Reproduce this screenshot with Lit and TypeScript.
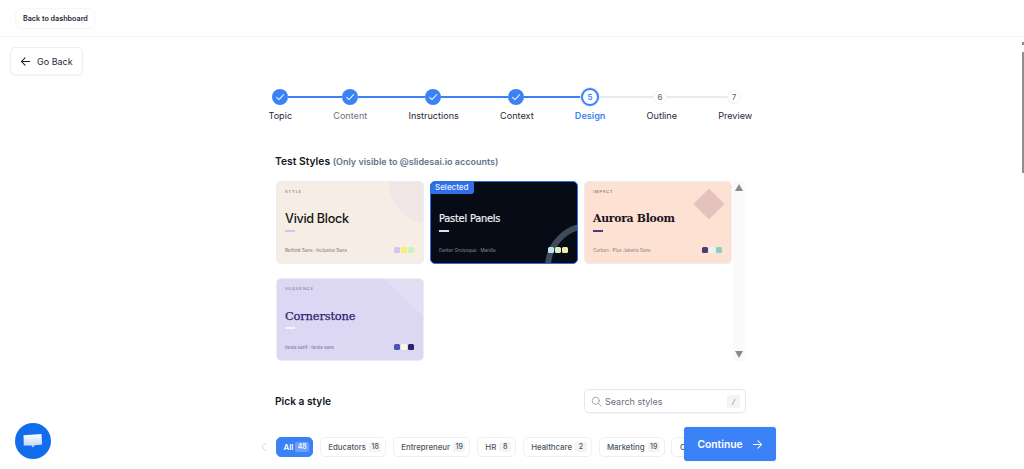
import { LitElement, html, css, svg } from "lit";
import { customElement } from "lit/decorators.js";

const STEPS = [
  { label: "Topic", state: "done", gap: 0 },
  { label: "Content", state: "done muted", gap: 54 },
  { label: "Instructions", state: "done", gap: 67 },
  { label: "Context", state: "done", gap: 67 },
  { label: "Design", state: "active", gap: 57 },
  { label: "Outline", state: "pending", gap: 54 },
  { label: "Preview", state: "pending", gap: 60 },
];

const CARDS = [
  { kicker: "STYLE", title: "Vivid Block", foot: "Rethink Sans · Inclusive Sans", cls: "vivid", sw: ["#d5c3f2", "#f7ee78", "#c6f5c0"] },
  { kicker: "", title: "Pastel Panels", foot: "Darker Grotesque · Manilla", cls: "pastel", sw: ["#bfe3f7", "#d8f0c6", "#f7e8a8"] },
  { kicker: "IMPACT", title: "Aurora Bloom", foot: "Corben · Plus Jakarta Sans", cls: "aurora", sw: ["#4f3a78", "#e3f6f6", "#84cfca"] },
  { kicker: "SEQUENCE", title: "Cornerstone", foot: "tiesta serif · tiesta sans", cls: "corner", sw: ["#4a55b8", "#fbfbdc", "#2e2070"] },
];

const CHIPS: [string, number][] = [
  ["Educators", 18], ["Entrepreneur", 19], ["HR", 8], ["Healthcare", 2], ["Marketing", 19], ["Operations", 6],
];

const check = svg`<path d="M4.6 8.3 7 10.6l4.6-5" fill="none" stroke="#e8f0ff" stroke-width="1.1" stroke-linecap="round" stroke-linejoin="round"/>`;

@customElement("app-root")
export class AppRoot extends LitElement {
  static styles = css`
    :host { display: block; height: 469px; overflow: hidden; position: relative; background: #fff;
      font-family: Inter, "Liberation Sans", sans-serif; color: #111827; }
    .top { height: 36px; border-bottom: 1px solid #f3f4f6; display: flex; align-items: center; padding-left: 15px; }
    .dash { height: 21px; width: 80px; box-sizing: border-box; padding-left: 7px; display: flex; align-items: center; border: 1px solid #f6f6f8; border-radius: 6px;
      font-size: 7.2px; font-weight: 600; color: #1f2937; margin-top: 1px; white-space: nowrap; }
    .back { margin: 10px 0 0 10px; width: 73px; height: 28px; box-sizing: border-box; display: flex; align-items: center; gap: 6px; padding-left: 9px;
      border: 1px solid #eeeff1; border-radius: 5px; box-shadow: 0 1px 2px rgba(0,0,0,.05); font-size: 9px; color: #1f2937; white-space: nowrap; }
    .col { margin-left: 268px; width: 484px; }
    .track { display: flex; align-items: center; height: 18px; margin-top: 13px; padding-left: 4px; }
    .dot { flex: none; width: 16px; height: 16px; border-radius: 50%; background: #3b82f6; display: flex; align-items: center; justify-content: center; }
    .dot svg { width: 16px; height: 16px; }
    .dot.active { width: 18px; height: 18px; box-sizing: border-box; background: #fff; border: 2px solid #3b82f6; box-shadow: 0 0 0 1px #dbe7fd; color: #3b82f6; font-size: 8px; font-weight: 600; }
    .dot.pending { width: 14px; height: 14px; box-sizing: border-box; background: #fff; border: 1px solid #eef0f4; color: #6b7280; font-size: 8px; font-weight: 500; }
    .link { flex: none; height: 2px; background: #3b82f6; }
    .link.off { background: #e8eaf3; }
    .labels { display: flex; gap: 41.2px; margin-top: 2px; padding-left: .5px; font-size: 9.1px; line-height: 16px; color: #1f2937; white-space: nowrap; }
    .labels .muted { color: #71717a; }
    .labels .active { color: #3b82f6; font-weight: 600; }
    .h { margin: 29px 0 0 7px; font-size: 10.3px; font-weight: 600; line-height: 16px; color: #111827; }
    .h small { font-size: 9px; font-weight: 600; color: #64748b; }
    .panel { margin: 11px 0 0 8px; width: 470px; height: 180px; display: flex; }
    .grid { width: 457px; display: grid; grid-template-columns: repeat(3, 148px); grid-auto-rows: 83px; column-gap: 6px; row-gap: 14px; }
    .bar { width: 12px; background: #fafafa; display: flex; flex-direction: column; justify-content: space-between; align-items: center; padding: 3px 0; box-sizing: border-box; }
    .tri { width: 0; height: 0; border-left: 4.5px solid transparent; border-right: 4.5px solid transparent; }
    .tri.up { border-bottom: 7px solid #8a8a8a; }
    .tri.down { border-top: 7px solid #8a8a8a; }
    .card { position: relative; overflow: hidden; box-sizing: border-box; border-radius: 5px; border: 1px solid #ecedf2; padding: 7px 9px 0 8px; display: flex; flex-direction: column; }
    .kicker { font-size: 4px; letter-spacing: .9px; height: 6px; line-height: 6px; color: #5c5c5c; }
    .title { margin-top: 15px; font-size: 13px; line-height: 18px; height: 18px; font-weight: 500; white-space: nowrap; position: relative; }
    .rule { width: 10px; height: 2px; margin-top: 1.5px; position: relative; }
    .bottom { margin-top: 15.5px; display: flex; justify-content: space-between; align-items: center; position: relative; }
    .foot { font-size: 4.5px; color: #77736f; white-space: nowrap; }
    .sws { display: flex; gap: 1px; }
    .sw { width: 6px; height: 6px; border-radius: 1.5px; }
    .vivid { background: #f6ede4; }
    .vivid .title { color: #141414; font-weight: 500; font-size: 12.6px; letter-spacing: -.3px; }
    .vivid .rule { background: #d5c2f0; }
    .vivid::before { content: ""; position: absolute; width: 80px; height: 80px; border-radius: 50%; right: -46px; top: -39px; background: #f1e6e6; }
    .pastel { background: #070b16; border: 1.5px solid #2f6fe8; }
    .pastel .title { color: #f2f4f7; font-family: "DejaVu Sans", sans-serif; font-weight: 400; font-size: 9.8px; letter-spacing: -.2px; -webkit-text-stroke: .2px #f2f4f7; }
    .pastel .rule { background: #cfe8f7; }
    .pastel .foot { color: #8a8f9a; }
    .arc { position: absolute; right: -56px; bottom: -48px; width: 88px; height: 88px; box-sizing: border-box; border: 6.5px solid #3f4a5a; border-radius: 50%; }
    .badge { position: absolute; left: -1px; top: -1px; height: 13px; padding: 0 5px; background: #2f6fe8; color: #eaf1ff; font-size: 8px; font-weight: 500; line-height: 13px; border-bottom-right-radius: 3px; }
    .aurora { background: #fde1d3; }
    .aurora .title { color: #1a1420; font-family: "DejaVu Serif", serif; font-weight: 700; font-size: 10.9px; letter-spacing: -.3px; }
    .aurora .rule { background: #4f3a78; }
    .aurora .foot { color: #8a7a78; }
    .aurora::before { content: ""; position: absolute; width: 22px; height: 22px; right: 11px; top: 11px; background: #e4c3bd; transform: rotate(45deg); }
    .corner { background: #dcd8f3; }
    .corner .title { color: #2b1f6e; font-family: "DejaVu Serif", serif; font-weight: 400; font-size: 11.5px; letter-spacing: -.2px; -webkit-text-stroke: .25px #2b1f6e; }
    .corner .rule { background: #f5f3fc; }
    .corner .kicker, .corner .foot { color: #6a6590; }
    .corner::before { content: ""; position: absolute; right: 0; top: 0; width: 39px; height: 37px; background: #e2dff5; clip-path: polygon(0 0, 100% 0, 100% 100%); }
    .row { margin: 28px 0 0 7px; display: flex; justify-content: space-between; align-items: center; width: 471px; }
    .row .h2 { font-size: 10.2px; font-weight: 600; }
    .search { width: 162px; height: 24px; box-sizing: border-box; border: 1px solid #e5e7eb; border-radius: 5px; display: flex; align-items: center; padding: 0 5px 0 6px; gap: 3px; font-size: 9px; color: #6b7280; box-shadow: 0 1px 1px rgba(0,0,0,.03); }
    .search span { flex: 1; }
    .search kbd { width: 13px; height: 13px; background: #f3f4f6; border-radius: 2px; font: italic 7px Inter, sans-serif; display: flex; align-items: center; justify-content: center; color: #6b7280; }
    .chips { margin: 24px 0 0 -8px; display: flex; align-items: center; width: 500px; }
    .chev { width: 16px; flex: none; display: flex; }
    .chip { flex: none; height: 20px; box-sizing: border-box; border: 1px solid #eef0f3; border-radius: 5px; padding: 0 4px 0 7.5px; margin-right: 6.5px; display: flex; align-items: center; gap: 3px; font-size: 7.8px; color: #4b5563; font-weight: 500; white-space: nowrap; }
    .chip b { min-width: 7px; padding: 0 2.5px; height: 10px; line-height: 10px; background: #f3f4f6; border-radius: 2px; text-align: center; font-size: 7px; font-weight: 500; color: #4b5563; }
    .chip.on { background: #3b82f6; color: #fff; border-color: #3b82f6; font-weight: 600; padding: 0 3px 0 6.5px; gap: 2px; }
    .chip.on b { background: #6aa0f8; color: #fff; }
    .cta { position: absolute; left: 684px; top: 427px; width: 92px; height: 34px; background: #3b82f6; border-radius: 3px; color: #fff; font-size: 10.3px; font-weight: 600; display: flex; align-items: center; justify-content: center; gap: 9px; box-shadow: 0 0 1px rgba(59,130,246,.5); }
    .chat { position: absolute; left: 15px; top: 423px; width: 36px; height: 36px; border-radius: 50%; background: #126ded; display: flex; align-items: center; justify-content: center; }
    .thumb { position: absolute; right: 0; top: 52px; width: 2px; height: 121px; background: #909090; }
    .thumb-arrow { position: absolute; right: 0; top: 42px; width: 2px; height: 3px; background: #8a8a8a; }
  `;

  private card(c: (typeof CARDS)[number], i: number) {
    return html`<div class="card ${c.cls}">
      ${i === 1 ? html`<div class="arc"></div><div class="badge">Selected</div>` : ""}
      <div class="kicker">${c.kicker}</div>
      <div class="title">${c.title}</div>
      <div class="rule"></div>
      <div class="bottom">
        <div class="foot">${c.foot}</div>
        <div class="sws">${c.sw.map((s) => html`<div class="sw" style="background:${s}"></div>`)}</div>
      </div>
    </div>`;
  }

  render() {
    return html`
      <div class="top"><div class="dash">Back to dashboard</div></div>
      <div class="back">
        <svg width="11" height="11" viewBox="0 0 12 12" fill="none" stroke="#111827" stroke-width="1.1" stroke-linecap="round" stroke-linejoin="round"><path d="M10.5 6H1.5M5.5 2 1.5 6l4 4"/></svg>
        Go Back
      </div>
      <div class="col">
        <div class="track">
          ${STEPS.map((s, i) => html`
            ${i > 0 ? html`<div class="link ${s.state === "pending" ? "off" : ""}" style="width:${s.gap}px"></div>` : ""}
            ${s.state.startsWith("done")
              ? html`<div class="dot"><svg viewBox="0 0 16 16">${check}</svg></div>`
              : html`<div class="dot ${s.state}">${i + 1}</div>`}
          `)}
        </div>
        <div class="labels">
          ${STEPS.map((s) => html`<span class="${s.state.includes("muted") ? "muted" : s.state === "active" ? "active" : ""}">${s.label}</span>`)}
        </div>
        <div class="h">Test Styles <small>(Only visible to @slidesai.io accounts)</small></div>
        <div class="panel">
          <div class="grid">${CARDS.map((c, i) => this.card(c, i))}</div>
          <div class="bar"><div class="tri up"></div><div class="tri down"></div></div>
        </div>
        <div class="row">
          <div class="h2">Pick a style</div>
          <div class="search">
            <svg width="11" height="11" viewBox="0 0 12 12" fill="none" stroke="#9ca3af" stroke-width="1" stroke-linecap="round"><circle cx="5.2" cy="5.2" r="3.9"/><path d="m8.2 8.2 2.8 2.8"/></svg>
            <span>Search styles</span>
            <kbd>/</kbd>
          </div>
        </div>
        <div class="chips">
          <div class="chev"><svg width="8" height="10" viewBox="0 0 8 10" fill="none" stroke="#d1d5db" stroke-width="1" stroke-linecap="round" stroke-linejoin="round"><path d="M5.5 1 2 5l3.5 4"/></svg></div>
          <div class="chip on">All <b>48</b></div>
          ${CHIPS.map(([n, c]) => html`<div class="chip">${n} <b>${c}</b></div>`)}
        </div>
      </div>
      <div class="cta">Continue
        <svg width="11" height="11" viewBox="0 0 12 12" fill="none" stroke="#fff" stroke-width="1.1" stroke-linecap="round" stroke-linejoin="round"><path d="M1.5 6h9M6.5 2l4 4-4 4"/></svg>
      </div>
      <div class="chat">
        <svg width="22" height="18" viewBox="0 0 22 18">
          <defs><linearGradient id="g" x1="0" y1="0" x2="0" y2="1"><stop offset="0" stop-color="#ffffff"/><stop offset="1" stop-color="#b9d3fb"/></linearGradient></defs>
          <path d="M1.5 3.2 19.5 2l.6 10.5-7.5.7-1.6 2.3-1.6-2.1-7.6.1z" fill="url(#g)"/>
        </svg>
      </div>
      <div class="thumb-arrow"></div>
      <div class="thumb"></div>
    `;
  }
}
